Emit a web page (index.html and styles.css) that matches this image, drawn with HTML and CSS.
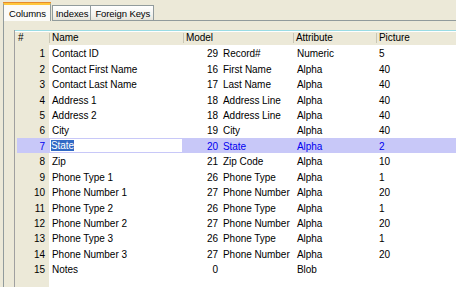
FILE: index.html
```html
<!DOCTYPE html>
<html>
<head>
<meta charset="utf-8">
<link rel="stylesheet" href="styles.css">
</head>
<body>
<div class="window">
  <div class="tabstrip">
    <div class="tab active">Columns</div>
    <div class="tab">Indexes</div>
    <div class="tab">Foreign Keys</div>
    <div class="tabfill"></div>
  </div>
  <div class="panel">
    <div class="grid">
      <div class="hdr">
        <div class="h h-num">#</div>
        <div class="h h-name">Name</div>
        <div class="h h-model">Model</div>
        <div class="h h-attr">Attribute</div>
        <div class="h h-pic">Picture</div>
      </div>
      <div class="row"><div class="c-num">1</div><div class="c-name">Contact ID</div><div class="c-mn">29</div><div class="c-mname">Record#</div><div class="c-attr">Numeric</div><div class="c-pic">5</div></div>
      <div class="row"><div class="c-num">2</div><div class="c-name">Contact First Name</div><div class="c-mn">16</div><div class="c-mname">First Name</div><div class="c-attr">Alpha</div><div class="c-pic">40</div></div>
      <div class="row"><div class="c-num">3</div><div class="c-name">Contact Last Name</div><div class="c-mn">17</div><div class="c-mname">Last Name</div><div class="c-attr">Alpha</div><div class="c-pic">40</div></div>
      <div class="row"><div class="c-num">4</div><div class="c-name">Address 1</div><div class="c-mn">18</div><div class="c-mname">Address Line</div><div class="c-attr">Alpha</div><div class="c-pic">40</div></div>
      <div class="row"><div class="c-num">5</div><div class="c-name">Address 2</div><div class="c-mn">18</div><div class="c-mname">Address Line</div><div class="c-attr">Alpha</div><div class="c-pic">40</div></div>
      <div class="row"><div class="c-num">6</div><div class="c-name">City</div><div class="c-mn">19</div><div class="c-mname">City</div><div class="c-attr">Alpha</div><div class="c-pic">40</div></div>
      <div class="row sel"><div class="c-num">7</div><div class="c-name"><div class="editbox"><span class="seltext">State</span></div></div><div class="c-mn">20</div><div class="c-mname">State</div><div class="c-attr">Alpha</div><div class="c-pic">2</div></div>
      <div class="row"><div class="c-num">8</div><div class="c-name">Zip</div><div class="c-mn">21</div><div class="c-mname">Zip Code</div><div class="c-attr">Alpha</div><div class="c-pic">10</div></div>
      <div class="row"><div class="c-num">9</div><div class="c-name">Phone Type 1</div><div class="c-mn">26</div><div class="c-mname">Phone Type</div><div class="c-attr">Alpha</div><div class="c-pic">1</div></div>
      <div class="row"><div class="c-num">10</div><div class="c-name">Phone Number 1</div><div class="c-mn">27</div><div class="c-mname">Phone Number</div><div class="c-attr">Alpha</div><div class="c-pic">20</div></div>
      <div class="row"><div class="c-num">11</div><div class="c-name">Phone Type 2</div><div class="c-mn">26</div><div class="c-mname">Phone Type</div><div class="c-attr">Alpha</div><div class="c-pic">1</div></div>
      <div class="row"><div class="c-num">12</div><div class="c-name">Phone Number 2</div><div class="c-mn">27</div><div class="c-mname">Phone Number</div><div class="c-attr">Alpha</div><div class="c-pic">20</div></div>
      <div class="row"><div class="c-num">13</div><div class="c-name">Phone Type 3</div><div class="c-mn">26</div><div class="c-mname">Phone Type</div><div class="c-attr">Alpha</div><div class="c-pic">1</div></div>
      <div class="row"><div class="c-num">14</div><div class="c-name">Phone Number 3</div><div class="c-mn">27</div><div class="c-mname">Phone Number</div><div class="c-attr">Alpha</div><div class="c-pic">20</div></div>
      <div class="row"><div class="c-num">15</div><div class="c-name">Notes</div><div class="c-mn">0</div><div class="c-mname"></div><div class="c-attr">Blob</div><div class="c-pic"></div></div>
      <div class="row filler"><div class="c-num"></div><div class="c-rest"></div></div>
    </div>
  </div>
</div>
</body>
</html>
```

FILE: styles.css
```css
* { box-sizing: border-box; }
html, body {
  margin: 0;
  padding: 0;
  width: 456px;
  height: 287px;
  overflow: hidden;
  background: #ECE9D8;
  font-family: "Liberation Sans", Arial, sans-serif;
  font-size: 10px;
  letter-spacing: -0.05px;
  color: #000;
}
.window {
  display: flex;
  flex-direction: column;
  height: 287px;
}
.tabstrip {
  display: flex;
  align-items: flex-end;
  height: 21px;
  padding-left: 3px;
  flex: none;
  font-size: 9.5px;
  letter-spacing: -0.1px;
}
.tab {
  height: 16px;
  line-height: 15px;
  padding: 0 2px 0 3px;
  border: 1px solid #919B9C;
  border-left: none;
  background: linear-gradient(#FFFFFF, #F3F3EF 60%, #E6E4DA);
  white-space: nowrap;
}
.tab.active {
  height: 19px;
  line-height: 17px;
  padding: 0 4px 0 5px;
  border-left: 1px solid #919B9C;
  border-bottom: none;
  border-top: 3px solid #FFC73C;
  background: #FBFBF8;
  position: relative;
  margin-right: 1px;
}
.tab.active::before {
  content: "";
  position: absolute;
  left: -1px;
  right: -1px;
  top: -3px;
  height: 1px;
  background: #E68B2C;
}
.tab:nth-child(2) { border-left: 1px solid #919B9C; }
.tab:nth-child(3) { padding-left: 4px; padding-right: 3px; }
.tabfill {
  flex: 1;
  border-bottom: 1px solid #919B9C;
  height: 1px;
}
.panel {
  flex: 1;
  margin-left: 3px;
  border-left: 1px solid #919B9C;
  padding: 9px 0 0 10px;
  display: flex;
  flex-direction: column;
  min-height: 0;
}
.grid {
  flex: 1;
  display: flex;
  flex-direction: column;
  border-left: 1px solid #A0A0A0;
  background: #fff;
  min-height: 0;
}
.hdr {
  display: flex;
  height: 15.3px;
  flex: none;
  border-top: 1px solid #9ADCE4;
  background: #ECE9D8;
  box-shadow: inset 0 1px 0 #fff;
}
.h {
  position: relative;
  padding-left: 3px;
  line-height: 14px;
  white-space: nowrap;
}
.h + .h::before {
  content: "";
  position: absolute;
  left: 0;
  top: 2px;
  bottom: 2px;
  width: 1px;
  background: #C9C6B4;
}
.h-num { width: 34px; padding-left: 3px; }
.h-name { width: 134px; }
.h-model { width: 110px; }
.h-attr { width: 83px; }
.h-pic { flex: 1; }

.row {
  display: flex;
  height: 15.43px;
  line-height: 17px;
  flex: none;
  white-space: nowrap;
}
.row > div { overflow: hidden; }
.c-num {
  width: 34px;
  text-align: right;
  padding-right: 4px;
  background: #ECE9D8;
}
.c-name { width: 134px; padding-left: 3px; }
.c-mn { width: 36px; text-align: right; padding-right: 1px; }
.c-mname { width: 74px; padding-left: 4px; }
.c-attr { width: 83px; padding-left: 4px; }
.c-pic { flex: 1; padding-left: 3px; }
.c-rest { flex: 1; }
.filler { flex: 1; }

.sel { background: #C8C8F8; color: #0000F0; }
.sel .c-num { background: linear-gradient(to right, #ECE9D8 2px, #C8C8F8 2px); }
.sel .c-name { padding: 1px; }
.editbox {
  background: #fff;
  height: 100%;
  line-height: 14px;
  padding-left: 1px;
}
.seltext { background: #316AC5; color: #fff; }
```
